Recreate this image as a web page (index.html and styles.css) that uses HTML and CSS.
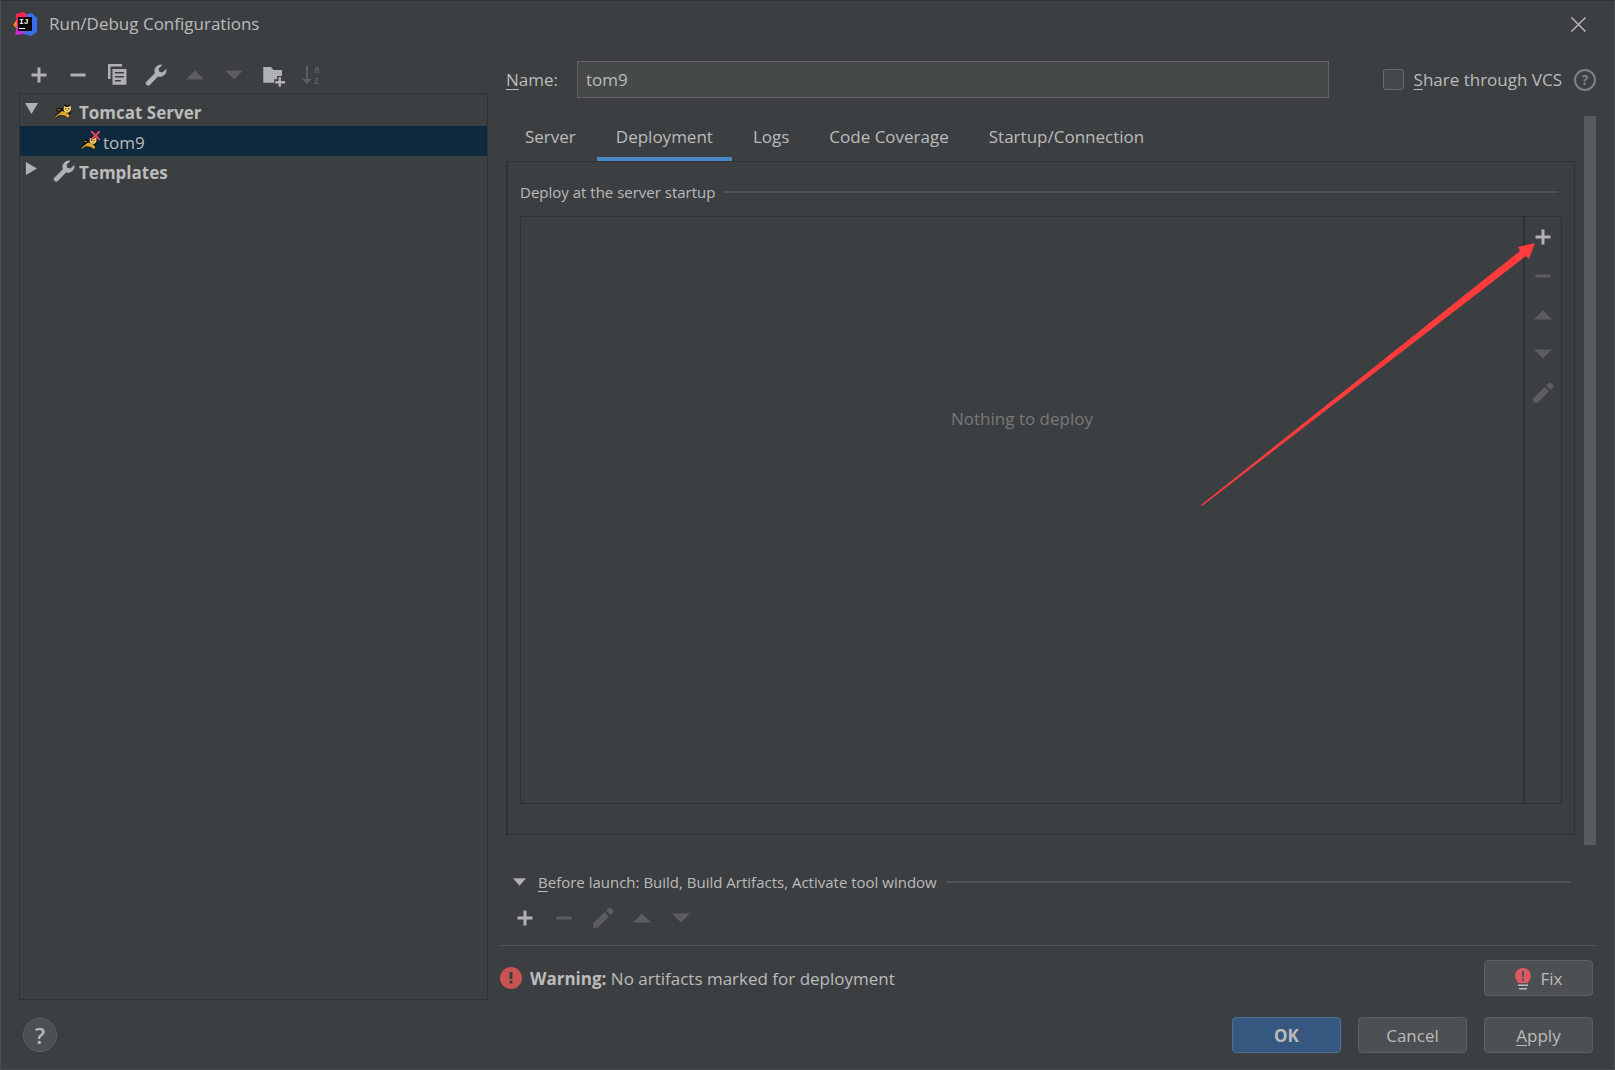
FILE: index.html
```html
<!DOCTYPE html>
<html lang="en">
<head>
    <meta charset="UTF-8">
    <meta name="viewport" content="width=device-width, initial-scale=1.0">
    <title>Run/Debug Configurations</title>
    <link rel="stylesheet" href="styles.css">
</head>
<body>
    <!-- shared icons -->
    <svg class="defs" width="0" height="0">
        <symbol id="add" viewBox="0 0 16 16"><path d="M7 3h2v4h4v2H9v4H7V9H3V7h4z"/></symbol>
        <symbol id="remove" viewBox="0 0 16 16"><path d="M3 7h10v2H3z"/></symbol>
        <symbol id="up" viewBox="0 0 16 16"><path d="M2 11l6-6 6 6z"/></symbol>
        <symbol id="down" viewBox="0 0 16 16"><path d="M2 5l6 6 6-6z"/></symbol>
        <symbol id="copy" viewBox="0 0 16 16">
            <path d="M2 .7h9.300v1.700H3.700v8.300H2z"/>
            <path fill-rule="evenodd" d="M5 4h9.300v10.500H5zM6.600 6v1h6V6zm0 2.700v1h6v-1zm0 2.700v1h4v-1z"/>
        </symbol>
        <symbol id="wrench" viewBox="0 0 16 16"><path d="M12.3 1.2A4.4 4.4 0 0 0 7.2 6.9L1.7 12.3a1.5 1.5 0 0 0 2.2 2.3L9.3 9A4.4 4.4 0 0 0 14.9 3.9L12.3 6.4 10.2 5.8 9.7 3.8z"/></symbol>
        <symbol id="folder" viewBox="0 0 16 16">
            <path d="M1.500 2.600h5.200l1.600 2H14v4h-3.300v2.200H8.800v2.400H1.500z"/>
            <path d="M11.700 9.500h1.600V12H16v1.600h-2.700v2.200h-1.600v-2.200H9.500V12h2.200z"/>
        </symbol>
        <symbol id="pencil" viewBox="0 0 16 16">
            <path d="M1.500 11.500 9 4l3 3-7.500 7.500h-3z"/>
            <path d="M10 3l1.700-1.600c.6-.5 1.200-.5 1.700 0l1.200 1.200c.5.6.5 1.200 0 1.800L13 6z"/>
        </symbol>
        <symbol id="cat" viewBox="0 0 16 16">
            <path fill="#111" d="M1 6l4-1 4 1V2l3 1 3-1v7l-1 5-8-2-4 2-2-1 4-4z"/>
            <path fill="#d9a72e" d="M1 13l6-5 4 1 3 3-1 2-4-2-4-.5L1 14z"/>
            <path fill="#f2d36b" d="M9 3.500l1.500 1h2L15 3v4l-2 2.500-3-.5-1.500-2z"/>
            <path fill="#d9a72e" d="M2 6.200l4 .6-1 1z"/>
            <path fill="#222" d="M10 5.600h1v1h-1zm2.400 0h1v1h-1zM11.300 7.300h.9v.7h-.9z"/>
        </symbol>
    </svg>

    <header class="titlebar">
        <svg class="logo" viewBox="0 0 24 24">
            <path fill="#fc801d" d="M4 7l-4 6 4 4 4-5z"/>
            <path fill="#fe2857" d="M3 2l8-2 4 4-5 8-6 2z"/>
            <path fill="#c22dd1" d="M2 23l2-10 6 2 2 7z"/>
            <path fill="#3b6bf0" d="M14 2l5-1 5 5v14l-6 4-7-2z"/>
            <path fill="#000" d="M5 5h14v14H5z"/>
            <text class="ij" x="6" y="12">IJ</text>
            <path fill="#fff" d="M6 16h6v1H6z"/>
        </svg>
        <h1>Run/Debug Configurations</h1>
        <button class="close" aria-label="Close">
            <svg viewBox="0 0 16 16"><path fill="none" stroke="#bbb" stroke-width="1.500" d="M.5.5l15 15m0-15l-15 15"/></svg>
        </button>
    </header>

    <main>
        <section class="sidebar">
            <div class="toolbar">
                <button aria-label="Add"><svg><use href="#add"/></svg></button>
                <button aria-label="Remove"><svg><use href="#remove"/></svg></button>
                <button aria-label="Copy"><svg><use href="#copy"/></svg></button>
                <button aria-label="Edit templates"><svg><use href="#wrench"/></svg></button>
                <button aria-label="Move up" disabled><svg><use href="#up"/></svg></button>
                <button aria-label="Move down" disabled><svg><use href="#down"/></svg></button>
                <button aria-label="New folder"><svg><use href="#folder"/></svg></button>
                <button aria-label="Sort" disabled>
                    <svg viewBox="0 0 24 24">
                        <path d="M6 3h2v13h4l-5 5-5-5h4z"/>
                        <text class="az" x="14" y="10">a</text>
                        <text class="az" x="14" y="21">z</text>
                    </svg>
                </button>
            </div>
            <ul class="tree">
                <li>
                    <svg class="toggle" viewBox="0 0 14 14"><path d="M0 1h14L7 13z"/></svg>
                    <svg class="cat"><use href="#cat" y="1" width="18" height="18"/></svg>
                    <b>Tomcat Server</b>
                </li>
                <li class="child selected">
                    <svg class="cat" viewBox="0 0 20 20">
                        <use href="#cat" y="3" width="18" height="17"/>
                        <path fill="none" stroke="#e0455a" stroke-width="2" d="M11 0l9 9m0-9l-9 9"/>
                    </svg>
                    <span>tom9</span>
                </li>
                <li>
                    <svg class="toggle" viewBox="0 0 14 14"><path d="M1 0l12 7-12 7z"/></svg>
                    <svg class="wrench"><use href="#wrench"/></svg>
                    <b>Templates</b>
                </li>
            </ul>
        </section>

        <section class="content">
            <div class="name-row">
                <label for="name"><u>N</u>ame:</label>
                <input id="name" type="text" value="tom9">
                <input id="share" type="checkbox">
                <label for="share"><u>S</u>hare through VCS</label>
                <svg class="hint" viewBox="0 0 22 22"><circle cx="11" cy="11" r="10"/><text x="11" y="16">?</text></svg>
            </div>

            <div class="scroller">
                <div class="config">
                    <nav class="tabs">
                        <button>Server</button>
                        <button class="active">Deployment</button>
                        <button>Logs</button>
                        <button>Code Coverage</button>
                        <button>Startup/Connection</button>
                    </nav>
                    <div class="panel">
                        <h2 class="rule">Deploy at the server startup</h2>
                        <div class="deploy">
                            <p class="empty">Nothing to deploy</p>
                            <div class="side-tools">
                                <button aria-label="Add artifact"><svg><use href="#add"/></svg></button>
                                <button aria-label="Remove artifact" disabled><svg><use href="#remove"/></svg></button>
                                <button aria-label="Artifact up" disabled><svg><use href="#up"/></svg></button>
                                <button aria-label="Artifact down" disabled><svg><use href="#down"/></svg></button>
                                <button aria-label="Edit artifact" disabled><svg><use href="#pencil"/></svg></button>
                            </div>
                            <svg class="pointer" viewBox="0 0 338 268"><path d="M336 3l-17 4 2 4L2 265l1 1L327 16l3 3z"/></svg>
                        </div>
                    </div>
                </div>
                <div class="scrollbar"></div>
            </div>

            <div class="before">
                <h2 class="rule">
                    <svg class="fold" viewBox="0 0 14 8"><path d="M0 0h14L7 8z"/></svg>
                    <span><u>B</u>efore launch: Build, Build Artifacts, Activate tool window</span>
                </h2>
                <div class="toolbar">
                    <button aria-label="Add task"><svg><use href="#add"/></svg></button>
                    <button aria-label="Remove task" disabled><svg><use href="#remove"/></svg></button>
                    <button aria-label="Edit task" disabled><svg><use href="#pencil"/></svg></button>
                    <button aria-label="Task up" disabled><svg><use href="#up"/></svg></button>
                    <button aria-label="Task down" disabled><svg><use href="#down"/></svg></button>
                </div>
            </div>

            <div class="warning">
                <svg class="alert" viewBox="0 0 22 22"><circle cx="11" cy="11" r="11" fill="#c75450"/><path fill="#3c3f41" d="M9.500 5h3v7h-3zm0 8.500h3v3h-3z"/></svg>
                <p><b>Warning:</b> No artifacts marked for deployment</p>
                <button class="btn fix">
                    <svg class="bulb" viewBox="0 0 16 22">
                        <path fill="#db5860" d="M8 0a8 8 0 0 1 8 8c0 3-2 4-3 7H3C2 12 0 11 0 8a8 8 0 0 1 8-8z"/>
                        <path fill="#4c5052" d="M7 3h2v6H7zm0 7.500h2v2H7z"/>
                        <path fill="#bbb" d="M3 16.500h10v1.500H3zM4 20h8v1.500H4z"/>
                    </svg>
                    Fix
                </button>
            </div>
        </section>
    </main>

    <footer>
        <button class="help" aria-label="Help">?</button>
        <button class="btn primary">OK</button>
        <button class="btn">Cancel</button>
        <button class="btn"><u>A</u>pply</button>
    </footer>
</body>
</html>
```

FILE: styles.css
```css
* {
    box-sizing: border-box;
}
body {
    margin: 0;
    min-height: 100vh;
    display: flex;
    flex-direction: column;
    border: 1px solid #4a4c4e;
    border-top-color: #303335;
    background: #3c3f41;
    color: #bbb;
    font: 17px/24px 'Segoe UI', 'Open Sans', 'Noto Sans', sans-serif;
}
button, input {
    font: inherit;
    color: inherit;
}
button {
    padding: 0;
    border: 0;
    background: none;
}
h1, h2, p, ul {
    margin: 0;
    padding: 0;
    font-size: inherit;
    font-weight: normal;
}
svg {
    display: block;
    flex: none;
    fill: #afb1b3;
}
u {
    text-underline-offset: 3px;
}
.defs {
    position: absolute;
}
.az {
    font: bold 10px 'Liberation Sans', sans-serif;
}

/* title bar */
.titlebar {
    display: flex;
    align-items: center;
    gap: 12px;
    height: 46px;
    padding: 0 28px 0 12px;
}
.titlebar h1 {
    flex: 1;
}
.logo {
    width: 24px;
    height: 24px;
}
.ij {
    font: bold 8px 'Liberation Mono', monospace;
    fill: #fff;
}
.close svg {
    width: 15px;
    height: 15px;
}

main {
    flex: 1;
    display: grid;
    grid-template-columns: minmax(300px, 469px) 1fr;
    gap: 12px;
    padding: 0 18px;
}

/* toolbars */
.toolbar {
    display: flex;
    gap: 15px;
}
.toolbar svg, .side-tools svg {
    width: 24px;
    height: 24px;
}
button:disabled svg {
    fill: #5b5d5f;
}

/* left side */
.sidebar {
    display: flex;
    flex-direction: column;
}
.sidebar .toolbar {
    padding: 16px 8px 6px;
}
.tree {
    flex: 1;
    border: 1px solid #2f3234;
    padding-top: 2px;
    list-style: none;
}
.tree li {
    display: flex;
    align-items: center;
    height: 30px;
    padding-left: 5px;
}
.tree b, .tree span {
    padding-top: 4px;
}
.tree .child {
    padding-left: 60px;
}
.selected {
    background: #0d293e;
}
.toggle {
    width: 13px;
    height: 13px;
    margin: 0 16px 5px 0;
}
.cat {
    width: 20px;
    height: 20px;
    margin-right: 5px;
}
.child .cat {
    margin-right: 3px;
}
.wrench {
    width: 24px;
    height: 24px;
    margin: 0 3px 0 -2px;
}

/* right side */
.content {
    display: flex;
    flex-direction: column;
    min-width: 0;
}
.name-row {
    display: flex;
    align-items: center;
    padding: 14px 0 18px 6px;
}
.name-row input[type=text] {
    flex: 1;
    min-width: 0;
    height: 37px;
    margin: 0 54px 0 19px;
    padding: 0 8px;
    border: 1px solid #646464;
    background: #45494a;
}
.name-row input[type=checkbox] {
    appearance: none;
    width: 21px;
    height: 21px;
    margin: 0 10px 0 0;
    border: 1px solid #6b6b6b;
    border-radius: 3px;
    background: #43494a;
}
.hint {
    width: 22px;
    height: 22px;
    margin-left: 12px;
}
.hint circle {
    fill: none;
    stroke: #7f8284;
    stroke-width: 2;
}
.hint text {
    font: bold 14px 'Open Sans', sans-serif;
    fill: #7f8284;
    text-anchor: middle;
}
.scroller {
    flex: 1;
    display: flex;
    gap: 9px;
}
.config {
    flex: 1;
    display: flex;
    flex-direction: column;
    padding: 0 0 10px 6px;
}
.scrollbar {
    width: 12px;
    background: #595b5d;
}
.tabs {
    display: flex;
    gap: 2px;
}
.tabs button {
    height: 46px;
    padding: 0 19px;
    border-bottom: 5px solid transparent;
}
.tabs .active {
    border-color: #4a88c7;
}
.panel {
    flex: 1;
    display: flex;
    flex-direction: column;
    margin-top: -1px;
    padding: 18px 12px 30px;
    border: 1px solid #2f3234;
    border-left-width: 2px;
}
.rule {
    display: flex;
    align-items: center;
    font-size: 15px;
    line-height: 24px;
}
.rule::after {
    content: '';
    flex: 1;
    height: 2px;
    margin: 0 4px 0 9px;
    background: #515456;
}
.deploy {
    flex: 1;
    display: flex;
    position: relative;
    margin-top: 12px;
    border: 1px solid #2f3234;
}
.empty {
    flex: 1;
    padding-top: 190px;
    text-align: center;
    color: #787878;
}
.side-tools {
    display: flex;
    flex-direction: column;
    gap: 15px;
    padding: 8px 6px;
    border-left: 2px solid #2f3234;
}
/* red arrow pointing at the add button */
.pointer {
    position: absolute;
    top: 23px;
    right: 24px;
    width: 338px;
    height: 268px;
    fill: #ff3b3b;
    pointer-events: none;
}
.before {
    padding: 25px 21px 15px 13px;
}
.fold {
    width: 13px;
    height: 8px;
    margin-right: 12px;
}
.before .toolbar {
    padding-top: 12px;
}
.warning {
    display: flex;
    align-items: center;
    gap: 8px;
    padding: 14px 3px 4px 0;
    border-top: 1px solid #515456;
}
.warning p {
    flex: 1;
    padding-top: 2px;
}

/* buttons */
.btn {
    width: 109px;
    height: 36px;
    padding-top: 2px;
    border: 1px solid #5e6060;
    border-radius: 4px;
    background: #4c5052;
}
.fix {
    display: flex;
    align-items: center;
    justify-content: center;
    gap: 10px;
}
.primary {
    border-color: #4c708c;
    background: #365880;
    font-weight: bold;
}
.alert {
    width: 22px;
    height: 22px;
}
.bulb {
    width: 16px;
    height: 22px;
}
footer {
    display: flex;
    align-items: center;
    gap: 17px;
    padding: 17px 21px 16px 22px;
}
.help {
    width: 34px;
    height: 34px;
    margin-right: auto;
    border: 1px solid #5e6060;
    border-radius: 50%;
    background: #4c5052;
    font-size: 22px;
    font-weight: 600;
}
```
